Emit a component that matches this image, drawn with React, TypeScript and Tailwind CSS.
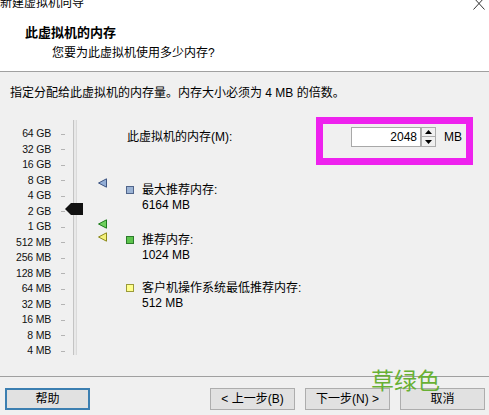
import React from 'react'

const labels = ['64 GB', '32 GB', '16 GB', '8 GB', '4 GB', '2 GB', '1 GB', '512 MB', '256 MB', '128 MB', '64 MB', '32 MB', '16 MB', '8 MB', '4 MB']

// left-pointing marker triangle on the memory scale
const Marker: React.FC<{ top: string; fill: string; stroke: string }> = ({ top, fill, stroke }) => (
  <svg width="10" height="10" viewBox="0 0 10 10" className={`absolute left-[98px] ${top}`}>
    <polygon points="0.5,5 8.5,0.8 8.5,9.2" fill={fill} stroke={stroke} strokeWidth="1" />
  </svg>
)

const LegendItem: React.FC<{ square: string; title: string; value: string; className?: string }> = ({ square, title, value, className }) => (
  <div className={`flex ${className ?? ''}`}>
    <div className={`w-[8px] h-[8px] mt-[3px] border ${square}`} />
    <div className="ml-[8px] leading-[15px]">
      <div>{title}</div>
      <div>{value}</div>
    </div>
  </div>
)

const Button: React.FC<{ children: React.ReactNode; focused?: boolean }> = ({ children, focused }) => (
  <button
    className={`w-[85px] h-[22px] bg-[#e1e1e1] text-[12px] leading-none ${focused ? 'border-2 border-[#3c7fb1]' : 'border border-[#adadad]'}`}
  >
    {children}
  </button>
)

const App: React.FC = () => {
  return (
    <div className="w-[489px] h-[415px] bg-[#f0f0f0] relative overflow-hidden text-[12px] text-black font-['Liberation_Sans','Noto_Sans_CJK_SC',sans-serif]">
      {/* Header */}
      <div className="h-[75px] bg-white border-b border-[#a0a0a0] relative">
        <div className="mt-[-3px] leading-[12px] text-[12px]">新建虚拟机向导</div>
        <svg width="14" height="14" viewBox="0 0 14 14" className="absolute left-[472px] top-0">
          <path d="M1.5 0.5 L12.5 12.5 M12.5 0.5 L1.5 12.5" stroke="#333" strokeWidth="1" fill="none" />
        </svg>
        <div className="mt-[16px] pl-[25px] text-[13px] font-bold leading-[16px]">此虚拟机的内存</div>
        <div className="mt-[4px] pl-[52px] leading-[16px]">您要为此虚拟机使用多少内存?</div>
      </div>

      <div className="mt-[13px] pl-[10px] leading-[16px]">指定分配给此虚拟机的内存量。内存大小必须为 4 MB 的倍数。</div>

      {/* Main area */}
      <div className="mt-[20px] h-[240px] flex">
        {/* Scale */}
        <div className="relative w-[126px] h-[240px]">
          <div className="pt-[5.25px] w-[65px]">
            {labels.map((l) => (
              <div key={l} className="h-[15.5px] flex items-center justify-end text-[10.5px] tracking-[-0.2px] text-[#111]">
                <span>{l}</span>
                <span className="ml-[10px] w-[4px] h-px bg-[#b4b4b4]" />
              </div>
            ))}
          </div>
          <div className="absolute left-[73px] top-[-1px] w-[4px] h-[235px] bg-[#e8e8e8] border-l border-[#c4c4c4] border-r border-r-[#dadada]" />
          <svg width="18" height="12" viewBox="0 0 18 12" className="absolute left-[65px] top-[82px]">
            <polygon points="0,6 6,0 18,0 18,12 6,12" fill="#111" />
          </svg>
          <Marker top="top-[57px]" fill="#93aed6" stroke="#3f5683" />
          <Marker top="top-[98px]" fill="#6fd05e" stroke="#1f7d1f" />
          <Marker top="top-[111px]" fill="#f4f07c" stroke="#8d8a1c" />
        </div>

        {/* Right side */}
        <div className="flex-1">
          <div className="mt-[6px] h-[20px] flex items-center">
            <div className="w-[225px] pl-[1px]">此虚拟机的内存(M):</div>
            <div className="w-[70px] h-[20px] bg-white border border-[#a8a8a8] flex items-center justify-end pr-[3px]">2048</div>
            <div className="w-[15px] h-[20px] flex flex-col">
              <div className="h-[10px] border border-[#acacac] bg-[#f0f0f0] flex items-center justify-center">
                <svg width="7" height="4" viewBox="0 0 7 4"><polygon points="0,4 3.5,0 7,4" fill="#000" /></svg>
              </div>
              <div className="h-[10px] border border-t-0 border-[#acacac] bg-[#f0f0f0] flex items-center justify-center">
                <svg width="7" height="4" viewBox="0 0 7 4"><polygon points="0,0 7,0 3.5,4" fill="#000" /></svg>
              </div>
            </div>
            <div className="ml-[8px]">MB</div>
          </div>

          <LegendItem className="mt-[36px]" square="bg-[#9bb3d4] border-[#50648a]" title="最大推荐内存:" value="6164 MB" />
          <LegendItem className="mt-[20px]" square="bg-[#5cc44c] border-[#2b7a2b]" title="推荐内存:" value="1024 MB" />
          <LegendItem className="mt-[18px]" square="bg-[#ffff8c] border-[#9a9a3a]" title="客户机操作系统最低推荐内存:" value="512 MB" />
        </div>
      </div>

      {/* Footer */}
      <div className="mt-[15px] border-t border-[#a0a0a0]" />
      <div className="mt-[11px] flex pl-[5px] pr-[4px]">
        <Button focused>帮助</Button>
        <div className="ml-auto flex gap-[10px]">
          <Button>&lt; 上一步(B)</Button>
          <Button>下一步(N) &gt;</Button>
          <Button>取消</Button>
        </div>
      </div>

      {/* Annotation overlays */}
      <div className="absolute left-[316px] top-[117px] w-[157px] h-[48px] border-[7px] border-[#ee22ee]" />
      <div className="absolute left-[371px] top-[366px] text-[23px] leading-[26px] text-[#68b034] font-['Noto_Sans_CJK_SC',sans-serif]">草绿色</div>
    </div>
  )
}

export default App
